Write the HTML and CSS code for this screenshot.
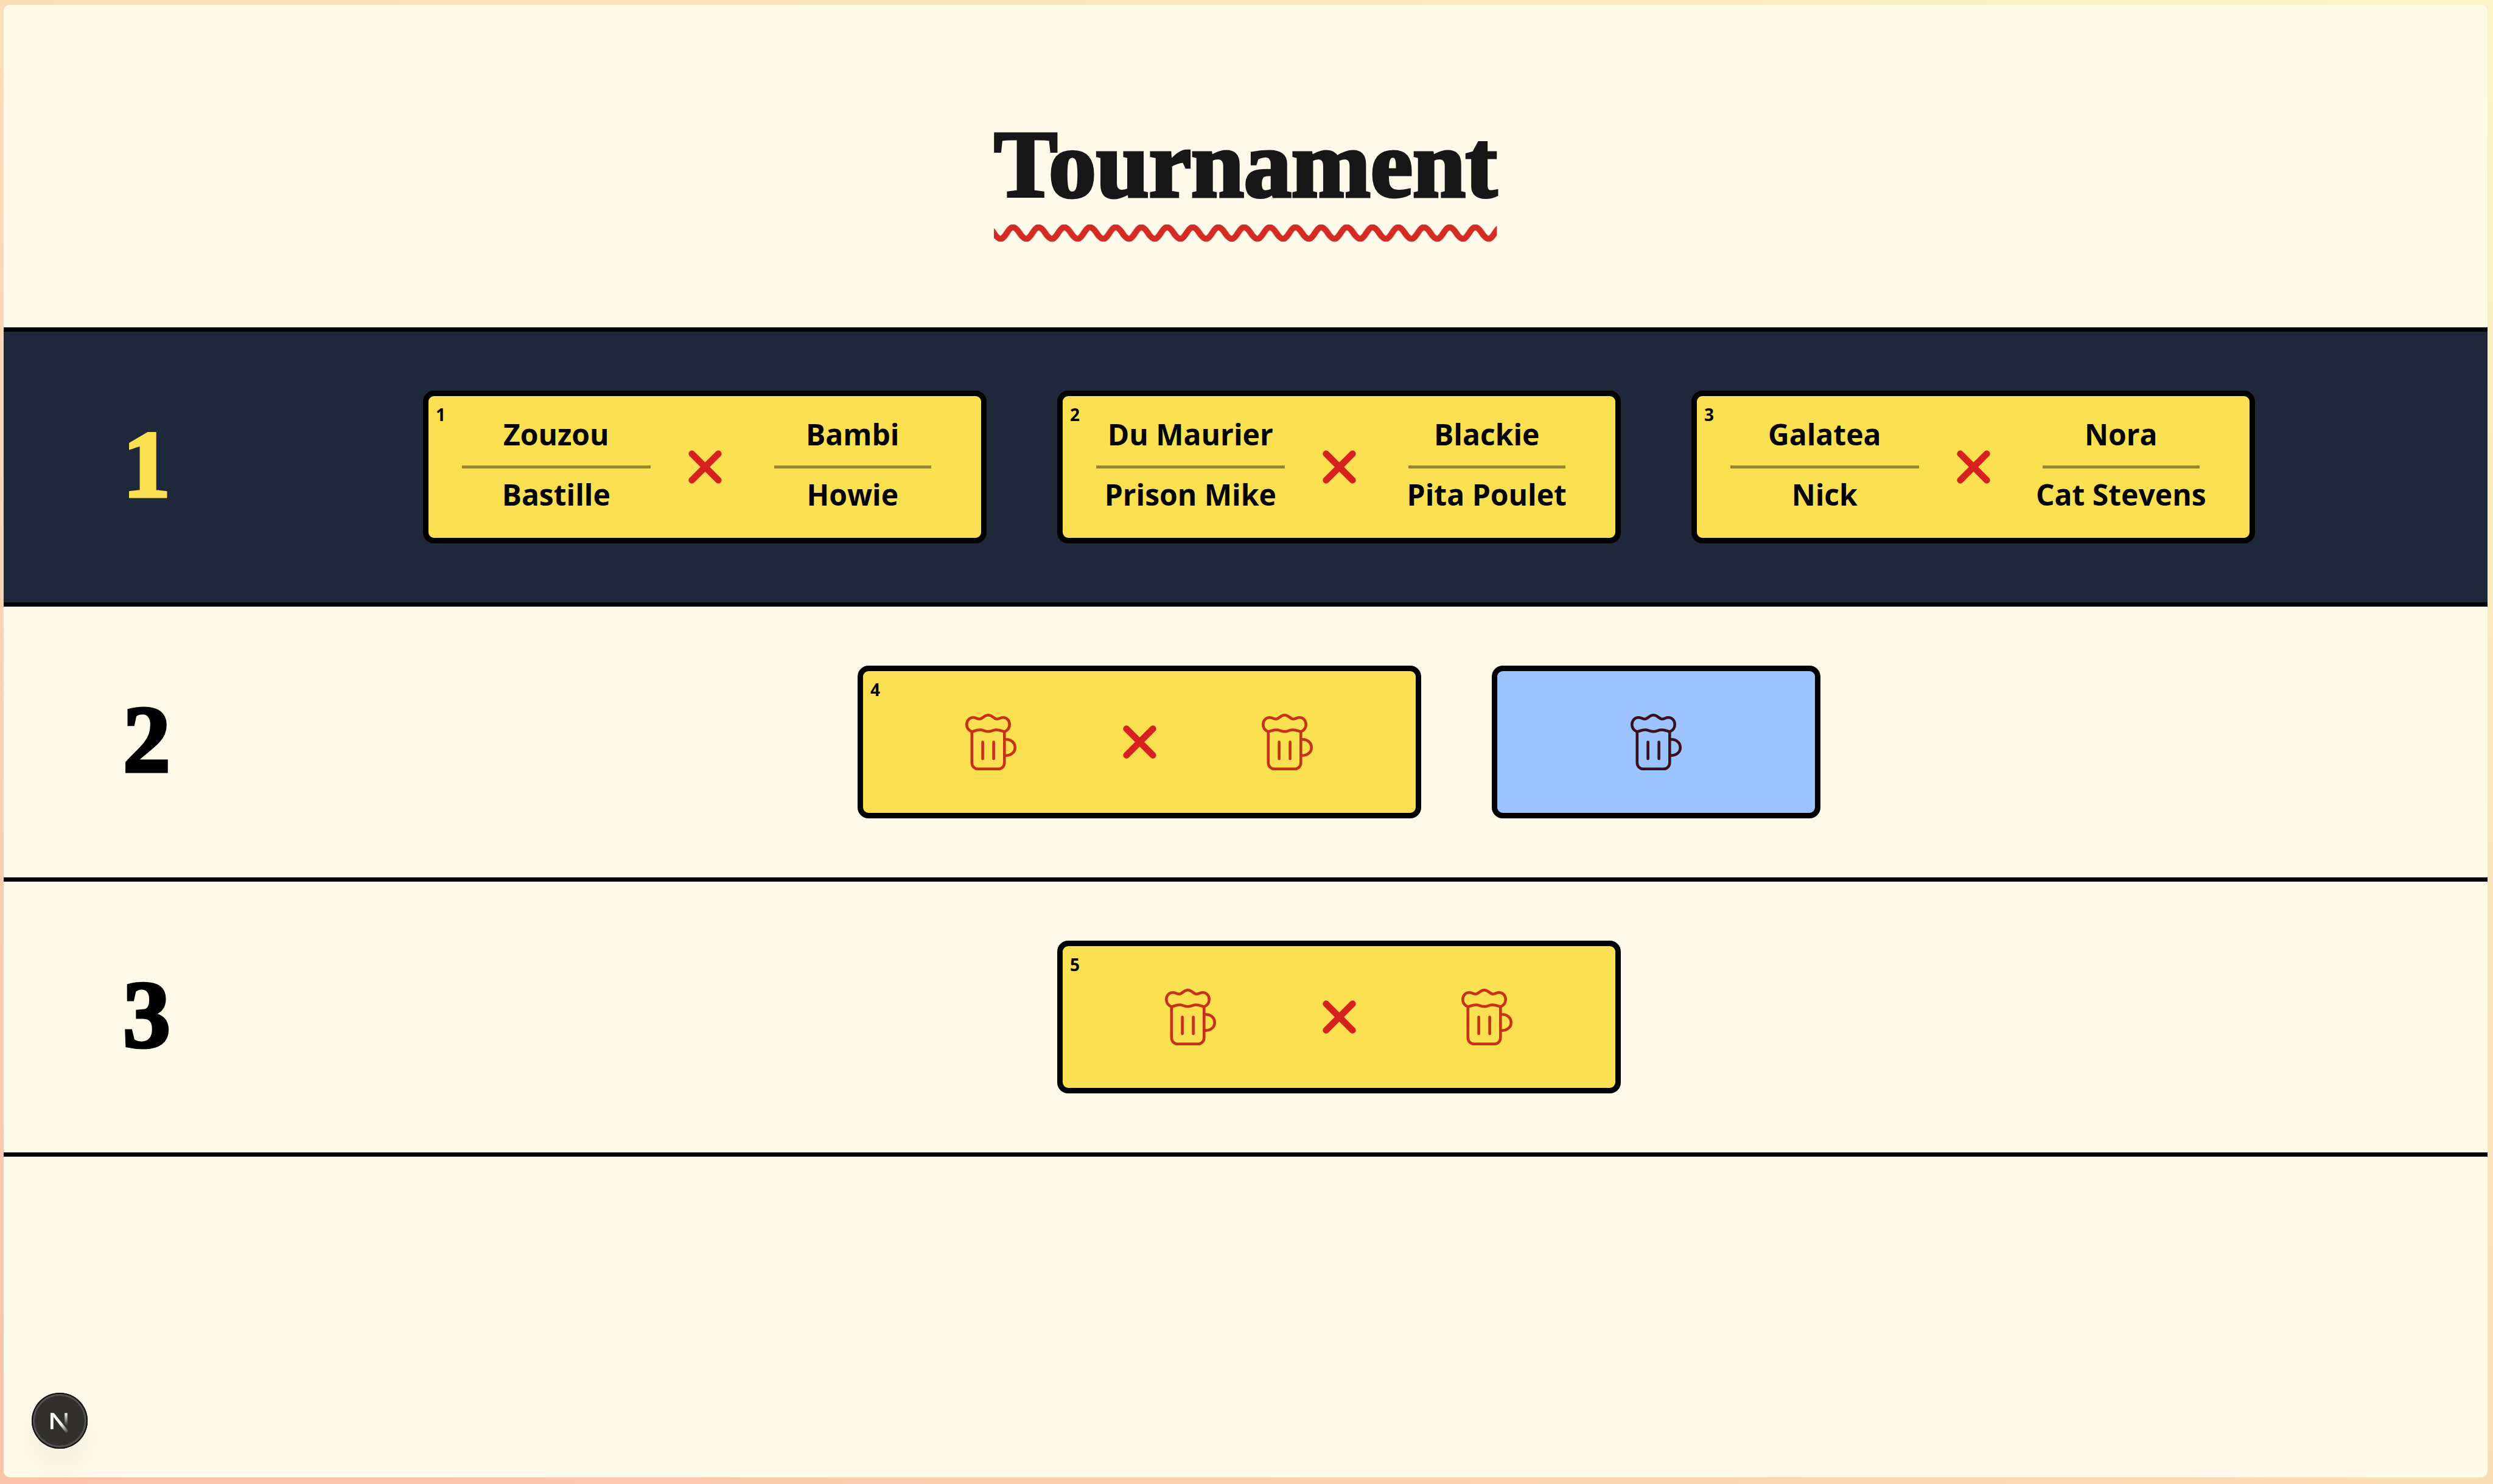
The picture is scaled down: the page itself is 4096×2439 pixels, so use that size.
FILE: index.html
```html
<!DOCTYPE html>
<html lang="en">
<head>
<meta charset="utf-8">
<meta name="viewport" content="width=device-width, initial-scale=1">
<title>Tournament</title>
<link rel="stylesheet" href="styles.css">
</head>
<body>
<svg class="sprite" aria-hidden="true">
  <symbol id="cross" viewBox="0 0 24 24">
    <path d="M18 6 6 18M6 6l12 12" fill="none" stroke="currentColor" stroke-width="3" stroke-linecap="round"/>
  </symbol>
  <symbol id="beer" viewBox="0 0 84 94">
    <g fill="none" stroke="currentColor" stroke-width="4.6" stroke-linecap="round" stroke-linejoin="round">
      <path d="M10.8 29.6C5.5 27.5 2.3 23 2.3 17.8C2.3 11 7 6.3 13 6.3C17.5 6.3 21 9.5 24.5 8.6C29 7.3 31.5 2.3 37.6 2.3C43.7 2.3 46.2 7.3 50.7 8.6C54.2 9.5 57.5 6.3 62 6.3C68.2 6.3 72.7 11 72.7 17.8C72.7 23 69.6 27.5 64.3 29.6C60 28.5 56.5 26.5 51 26.5C46 26.5 43 29.3 37.6 29.3C32.2 29.3 29 26.5 24 26.5C18.5 26.5 15 28.5 10.8 29.6Z"/>
      <path d="M10.8 29.6V80.7a10 10 0 0 0 10 10H54.3a10 10 0 0 0 10-10V29.6"/>
      <path d="M64.3 42.2H67c8.4 0 14.7 5.5 14.7 13.2S75.4 68.6 67 68.6H64.3"/>
      <path d="M28.6 46.5V74M46.6 46.5V74"/>
    </g>
  </symbol>
</svg>
<main class="page">
  <header class="header">
    <div class="heading">
      <h1 class="title">Tournament</h1>
      <svg class="wave" aria-hidden="true">
        <defs>
          <pattern id="wave" width="42.2" height="28" patternUnits="userSpaceOnUse">
            <path d="M-42.2 14c21.1 33 21.1 -33 42.2 0c21.1 33 21.1 -33 42.2 0c21.1 33 21.1 -33 42.2 0" fill="none" stroke="currentColor" stroke-width="10"/>
          </pattern>
        </defs>
        <rect width="100%" height="28" fill="url(#wave)"/>
      </svg>
    </div>
  </header>
  <section class="rounds">
    <div class="round round-active">
      <h2 class="round-number">1</h2>
      <div class="matches">
        <article class="match">
          <span class="match-number">1</span>
          <div class="team team-home"><span class="player">Zouzou</span><hr class="rule"><span class="player">Bastille</span></div>
          <svg class="cross"><use href="#cross"/></svg>
          <div class="team team-away"><span class="player">Bambi</span><hr class="rule"><span class="player">Howie</span></div>
        </article>
        <article class="match">
          <span class="match-number">2</span>
          <div class="team team-home"><span class="player">Du Maurier</span><hr class="rule"><span class="player">Prison Mike</span></div>
          <svg class="cross"><use href="#cross"/></svg>
          <div class="team team-away"><span class="player">Blackie</span><hr class="rule"><span class="player">Pita Poulet</span></div>
        </article>
        <article class="match">
          <span class="match-number">3</span>
          <div class="team team-home"><span class="player">Galatea</span><hr class="rule"><span class="player">Nick</span></div>
          <svg class="cross"><use href="#cross"/></svg>
          <div class="team team-away"><span class="player">Nora</span><hr class="rule"><span class="player">Cat Stevens</span></div>
        </article>
      </div>
    </div>
    <div class="round">
      <h2 class="round-number">2</h2>
      <div class="matches">
        <article class="match">
          <span class="match-number">4</span>
          <div class="team team-home team-open"><svg class="beer"><use href="#beer"/></svg></div>
          <svg class="cross"><use href="#cross"/></svg>
          <div class="team team-away team-open"><svg class="beer"><use href="#beer"/></svg></div>
        </article>
        <article class="match match-bye"><svg class="beer"><use href="#beer"/></svg></article>
      </div>
    </div>
    <div class="round">
      <h2 class="round-number">3</h2>
      <div class="matches">
        <article class="match">
          <span class="match-number">5</span>
          <div class="team team-home team-open"><svg class="beer"><use href="#beer"/></svg></div>
          <svg class="cross"><use href="#cross"/></svg>
          <div class="team team-away team-open"><svg class="beer"><use href="#beer"/></svg></div>
        </article>
      </div>
    </div>
  </section>
</main>
<button class="dev-badge" type="button" aria-label="Open developer tools">
  <svg class="dev-logo" viewBox="0 0 92 92" aria-hidden="true">
    <defs>
      <linearGradient id="slash" gradientUnits="userSpaceOnUse" x1="48" y1="51" x2="60" y2="67">
        <stop offset="0" stop-color="#fff"/><stop offset="1" stop-color="#fff" stop-opacity="0"/>
      </linearGradient>
      <linearGradient id="stem" gradientUnits="userSpaceOnUse" x1="56" y1="33" x2="56" y2="54">
        <stop offset="0" stop-color="#fff"/><stop offset="1" stop-color="#fff" stop-opacity="0"/>
      </linearGradient>
    </defs>
    <path d="M31 33.4h4.700v26.5H31z" fill="#fff"/>
    <path d="M31 33.4h5.800L60.5 63l-4 3.2z" fill="url(#slash)"/>
    <path d="M54.2 33.4h4.600v21h-4.600z" fill="url(#stem)"/>
  </svg>
</button>
</body>
</html>
```
FILE: styles.css
```css
* {
  box-sizing: border-box;
}

body {
  margin: 0;
  min-height: 100vh;
  display: flex;
  padding: 8px 9px 11px 6px;
  background: linear-gradient(to top right, #fcc3ab, #fbdeb6, #fcf3c4);
  color: #000;
  font-family: "Open Sans", "Noto Sans", sans-serif;
}

.sprite {
  position: absolute;
  width: 0;
  height: 0;
}

.page {
  flex: 1;
  background: #fffbeb;
  border-radius: 10px;
}

.header {
  display: flex;
  justify-content: center;
  padding: 185px 0 141px;
}

.heading {
  display: flex;
  flex-direction: column;
  gap: 20px;
}

.title,
.round-number {
  margin: 0;
  font-family: "Liberation Serif", serif;
  font-size: 156px;
  font-weight: 700;
  line-height: 156px;
  -webkit-text-stroke: 5px currentColor;
}

.title {
  color: #171717;
}

.wave {
  display: block;
  width: 100%;
  height: 28px;
  color: #d42c24;
}

.rounds {
  border-top: 7px solid #000;
}

.round {
  display: flex;
  align-items: center;
  padding: 97px 190px 97px 196px;
  border-bottom: 7px solid #000;
}

.round-active {
  background: #1f273a;
}

.round-active .round-number {
  color: #fbe051;
}

.round-number {
  width: 301px;
  padding-bottom: 8px;
}

.matches {
  flex: 1;
  display: flex;
  flex-wrap: wrap;
  justify-content: center;
  gap: 116px;
}

.match {
  position: relative;
  display: grid;
  grid-template-columns: minmax(0, 1fr) auto minmax(0, 1fr);
  align-items: center;
  width: 926px;
  height: 251px;
  border: 9px solid #000;
  border-radius: 18px;
  background: #fbe051;
}

.match-bye {
  grid-template-columns: 1fr;
  justify-items: center;
  width: 540px;
  background: #9ac3ff;
  color: #3d0f18;
}

.match-number {
  position: absolute;
  top: 12px;
  left: 12px;
  font-size: 28px;
  font-weight: 700;
  line-height: 36px;
}

.team {
  display: flex;
  flex-direction: column;
  align-items: center;
}

.team-home {
  padding: 0 46px 8px 55px;
}

.team-away {
  padding: 0 82px 8px 70px;
}

.team-open {
  padding-bottom: 0;
  color: #c9301a;
}

.player {
  font-size: 48px;
  font-weight: 700;
  line-height: 60px;
  white-space: nowrap;
}

.rule {
  width: 100%;
  height: 5px;
  margin: 21px 0 13px;
  border: 0;
  background: rgba(0, 0, 0, 0.4);
}

.cross {
  width: 87px;
  height: 87px;
  color: #d5221f;
}

.beer {
  width: 84px;
  height: 94px;
}

.dev-badge {
  position: fixed;
  left: 52px;
  bottom: 58px;
  width: 92px;
  height: 92px;
  padding: 0;
  border: 0;
  border-radius: 50%;
  background: #32302b;
  box-shadow: inset 0 0 0 2px #141412, inset 0 0 0 5px #53514d, 0 30px 60px rgba(0, 0, 0, 0.06);
}

.dev-logo {
  display: block;
  width: 92px;
  height: 92px;
}
```
